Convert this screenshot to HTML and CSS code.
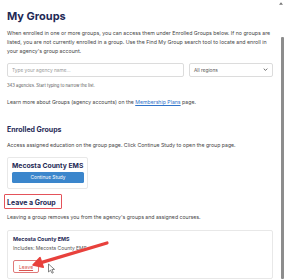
FILE: index.html
```html
<!DOCTYPE html>
<html lang="en">
<head>
<meta charset="utf-8">
<title>My Groups</title>
<link rel="stylesheet" href="styles.css">
</head>
<body>
<main class="page">
  <h1 class="title">My Groups</h1>
  <p class="intro">When enrolled in one or more groups, you can access them under Enrolled Groups below. If no groups are listed, you are not currently enrolled in a group. Use the Find My Group search tool to locate and enroll in your agency's group account.</p>

  <div class="search">
    <input class="field" type="text" placeholder="Type your agency name...">
    <div class="select">
      <span>All regions</span>
      <svg class="chev" viewBox="0 0 8 5" width="5" height="3"><path d="M1 1 L4 4 L7 1" fill="none" stroke="#555" stroke-width="1.4"/></svg>
    </div>
  </div>
  <p class="hint">343 agencies. Start typing to narrow the list.</p>
  <p class="learn">Learn more about Groups (agency accounts) on the <a href="#">Membership Plans</a> page.</p>

  <h2 class="section">Enrolled Groups</h2>
  <p class="desc">Access assigned education on the group page. Click Continue Study to open the group page.</p>
  <div class="group-card">
    <div class="group-name">Mecosta County EMS</div>
    <button class="btn-continue">Continue Study</button>
  </div>

  <h2 class="section leave-head">Leave a Group<span class="highlight"></span></h2>
  <p class="desc">Leaving a group removes you from the agency's groups and assigned courses.</p>
  <div class="leave-card">
    <div class="leave-name">Mecosta County EMS</div>
    <div class="leave-inc">Includes: Mecosta County EMS</div>
    <button class="btn-leave">Leave</button>
  </div>
</main>

<svg class="annot" width="285" height="279" viewBox="0 0 285 279">
  <line x1="107" y1="243" x2="41" y2="262.6" stroke="#e8413c" stroke-width="3.2" stroke-linecap="round"/>
  <polygon points="33,265 43.3,267.2 40,257.6" fill="#e8413c" stroke="#e8413c" stroke-width="1.5" stroke-linejoin="round"/>
  <path d="M48.5 264 L48.5 272 L50.5 270.2 L52 273.2 L53.3 272.6 L51.9 269.6 L54.5 269.4 Z" fill="#fff" stroke="#333" stroke-width="0.6" stroke-linejoin="round"/>
</svg>

<div class="scrollbar">
  <svg class="sb-arrow" viewBox="0 0 6 4" width="4" height="3"><path d="M0 4 L3 0 L6 4 Z" fill="#777"/></svg>
  <div class="sb-thumb"></div>
</div>
</body>
</html>
```

FILE: styles.css
```css
html, body {
  margin: 0;
  padding: 0;
  overflow: hidden;
  background: #fff;
}
body {
  font-family: Inter, "Liberation Sans", sans-serif;
  color: #4a4a4a;
  width: 285px;
  height: 279px;
}
.page {
  width: 266px;
  padding: 9.5px 0 0 7px;
}
.title {
  margin: 0;
  font-size: 11px;
  line-height: 13px;
  font-weight: 700;
  color: #1f2a56;
}
.intro {
  margin: 6.6px 0 0;
  font-size: 5.25px;
  line-height: 8.7px;
  color: #454545;
}
.search {
  display: grid;
  grid-template-columns: 1fr 84px;
  gap: 5px;
  margin-top: 8px;
}
.field, .select {
  box-sizing: border-box;
  height: 13.5px;
  border: 1px solid #dcdcdc;
  border-radius: 2px;
  background: #fff;
  font-family: inherit;
  font-size: 4.8px;
  padding: 0 4px;
  margin: 0;
  outline: none;
  width: 100%;
}
.field::placeholder {
  color: #9a9a9a;
}
.select {
  display: flex;
  align-items: center;
  justify-content: space-between;
  color: #555;
}
.chev {
  display: block;
}
.hint {
  margin: 6px 0 0;
  font-size: 4.2px;
  line-height: 6px;
  color: #555;
}
.learn {
  margin: 9.5px 0 0;
  font-size: 5.2px;
  line-height: 8px;
  color: #454545;
}
.learn a {
  color: #2f73c9;
}
.section {
  margin: 19px 0 0;
  font-size: 7px;
  line-height: 9px;
  font-weight: 700;
  color: #1f2a56;
}
.desc {
  margin: 6.5px 0 0;
  font-size: 5.2px;
  line-height: 8px;
  color: #454545;
}
.group-card {
  display: inline-flex;
  flex-direction: column;
  gap: 1.5px;
  margin-top: 8px;
  padding: 3.5px 3px 5px 4px;
  border: 1px solid #e8e8e8;
  border-radius: 2px;
  box-sizing: border-box;
  width: 81px;
}
.group-name {
  font-size: 6.8px;
  line-height: 9px;
  font-weight: 700;
  color: #1f2a56;
  white-space: nowrap;
}
.btn-continue {
  height: 11.5px;
  border: 0;
  border-radius: 1.5px;
  background: #3b86cc;
  color: #fff;
  font-family: inherit;
  font-size: 4.8px;
  padding: 0;
}
.leave-head {
  position: relative;
  margin-top: 8.5px;
}
.highlight {
  position: absolute;
  left: -3px;
  top: -3.5px;
  width: 58px;
  height: 15px;
  box-sizing: border-box;
  border: 1.5px solid #e4525a;
  border-radius: 1px;
}
.leave-card {
  display: flex;
  flex-direction: column;
  align-items: flex-start;
  margin-top: 9px;
  padding: 4.5px 5px 5px;
  border: 1px solid #e8e8e8;
  border-radius: 2px;
}
.leave-name {
  font-size: 5.4px;
  line-height: 7px;
  font-weight: 700;
  color: #1f2a56;
}
.leave-inc {
  margin-top: 2px;
  font-size: 5px;
  line-height: 7px;
  color: #555;
}
.btn-leave {
  margin-top: 8.5px;
  width: 26px;
  height: 13px;
  border: 1px solid #e07a7a;
  border-radius: 2px;
  background: #fff;
  color: #d9534f;
  font-family: inherit;
  font-size: 5px;
  padding: 0;
  text-decoration: underline;
}
.annot {
  position: fixed;
  left: 0;
  top: 0;
  pointer-events: none;
}
.scrollbar {
  position: fixed;
  top: 0;
  right: 0;
  width: 8px;
  height: 279px;
  background: #fff;
  display: flex;
  flex-direction: column;
  align-items: center;
}
.sb-arrow {
  display: block;
  margin-top: 2px;
}
.sb-thumb {
  margin-top: 32px;
  flex: 1;
  width: 3.5px;
  background: #8d8d8d;
  border-radius: 1px;
  align-self: flex-end;
  margin-right: 1px;
}
```
